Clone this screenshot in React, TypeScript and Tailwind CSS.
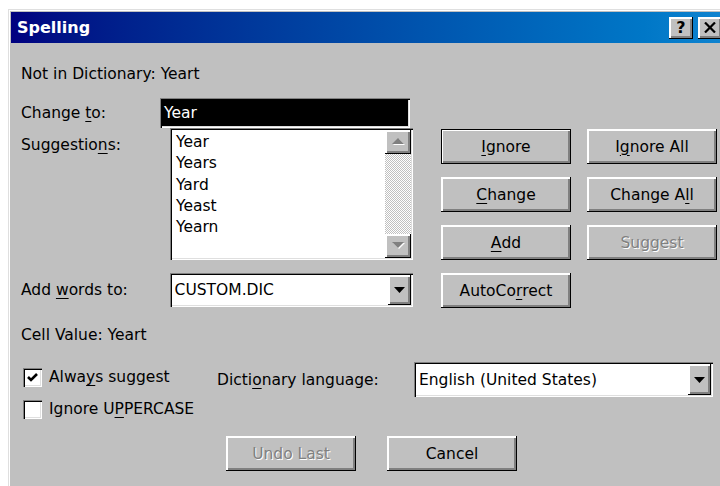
import type { ReactNode } from 'react';

// classic 3D bevels
const raised = 'shadow-[inset_-1px_-1px_0_#000,inset_2px_2px_0_#fff,inset_-3px_-3px_0_#808080]';
const sunken =
  'shadow-[inset_1px_1px_0_#808080,inset_2px_2px_0_#000,inset_-1px_-1px_0_#fff,inset_-2px_-2px_0_#dfdfdf]';

function Acc({ children }: { children: ReactNode }) {
  return <span className="underline underline-offset-[3px] decoration-1">{children}</span>;
}

function Button({
  children,
  isDefault,
  disabled,
}: {
  children: ReactNode;
  isDefault?: boolean;
  disabled?: boolean;
}) {
  return (
    <button
      className={`w-[130px] h-[35px] bg-[#c0c0c0] flex items-center justify-center ${raised} ${
        isDefault ? 'outline outline-1 outline-black -outline-offset-1' : ''
      } ${disabled ? 'text-[#808080] [text-shadow:1px_1px_0_#fff]' : 'text-black'}`}
    >
      {children}
    </button>
  );
}

function DownArrow({ color = '#000' }: { color?: string }) {
  return (
    <svg width="11" height="6" viewBox="0 0 11 6">
      <path d="M0 0 H11 L5.5 6 Z" fill={color} />
    </svg>
  );
}

function DropButton() {
  return (
    <div className={`w-[23px] h-full bg-[#c0c0c0] flex items-center justify-center ${raised}`}>
      <DownArrow />
    </div>
  );
}

function Combo({ value, className }: { value: string; className: string }) {
  return (
    <div className={`bg-white flex p-[2px] ${sunken} ${className}`}>
      <div className="flex-1 flex items-center pl-[3px]">{value}</div>
      <DropButton />
    </div>
  );
}

function Checkbox({ checked, children }: { checked?: boolean; children: ReactNode }) {
  return (
    <div className="flex items-center ml-[2px] gap-[7px]">
      <div className={`w-[19px] h-[19px] bg-white flex items-center justify-center ${sunken}`}>
        {checked && (
          <svg width="13" height="13" viewBox="0 0 13 13">
            <path d="M2 6 L5 9 L11 3" fill="none" stroke="#000" strokeWidth="2.6" />
          </svg>
        )}
      </div>
      <span>{children}</span>
    </div>
  );
}

function ScrollArrow({ up }: { up?: boolean }) {
  return (
    <div className={`h-[24px] bg-[#c0c0c0] flex items-center justify-center ${raised}`}>
      <svg width="13" height="8" viewBox="0 0 13 8">
        {up ? (
          <>
            <path d="M1 7 H13 L7 1 Z" fill="#fff" />
            <path d="M0 6 H12 L6 0 Z" fill="#808080" />
          </>
        ) : (
          <>
            <path d="M1 1 H13 L7 7 Z" fill="#fff" />
            <path d="M0 0 H12 L6 6 Z" fill="#808080" />
          </>
        )}
      </svg>
    </div>
  );
}

const suggestions = ['Year', 'Years', 'Yard', 'Yeast', 'Yearn'];

export default function App() {
  return (
    <div className="w-[720px] h-[486px] overflow-hidden bg-white pt-[9px] pl-[8px] font-['DejaVu_Sans',sans-serif]">
      <div className="w-[720px] h-[500px] bg-[#c0c0c0] border border-[#dfdfdf] p-[2px] shadow-[inset_1px_1px_0_#fff]">
        {/* title bar */}
        <div className="h-[31px] flex items-center justify-between pl-[6px] pr-[3px] bg-linear-to-r from-[#000080] to-[#1084d0]">
          <span className="text-white font-bold text-[16px]">Spelling</span>
          <div className="flex gap-[5px]">
            <div className={`w-[24px] h-[22px] bg-[#c0c0c0] flex items-center justify-center font-bold text-[16px] ${raised}`}>
              ?
            </div>
            <div className={`w-[24px] h-[22px] bg-[#c0c0c0] flex items-center justify-center ${raised}`}>
              <svg width="12" height="11" viewBox="0 0 12 11">
                <path d="M1 0.5 L11 10.5 M11 0.5 L1 10.5" stroke="#000" strokeWidth="2.2" />
              </svg>
            </div>
          </div>
        </div>

        <div className="pl-[10px] text-[15.5px] leading-[20px] text-black">
          <div className="mt-[21px]">Not in Dictionary: Yeart</div>

          <div className="mt-[14px] flex items-center">
            <div className="w-[139px]">
              Change <Acc>t</Acc>o:
            </div>
            <div className={`w-[250px] h-[30px] bg-white p-[2px] ${sunken}`}>
              <div className="h-full bg-black text-white flex items-center pl-[2px]">Year</div>
            </div>
          </div>

          <div className="flex">
            <div className="w-[392px]">
              <div className="flex">
                <div className="w-[149px] pt-[7px]">
                  Suggestio<Acc>n</Acc>s:
                </div>
                <div className={`w-[243px] h-[132px] bg-white p-[2px] flex ${sunken}`}>
                  <div className="flex-1 pt-[2px] pl-[4px] leading-[21.3px]">
                    {suggestions.map((s) => (
                      <div key={s}>{s}</div>
                    ))}
                  </div>
                  <div className="w-[26px] flex flex-col">
                    <ScrollArrow up />
                    <div className="flex-1 bg-[repeating-conic-gradient(#c0c0c0_0_25%,#fff_0_50%)] bg-[length:2px_2px]" />
                    <ScrollArrow />
                  </div>
                </div>
              </div>
              <div className="mt-[13px] flex items-center">
                <div className="w-[149px]">
                  Add <Acc>w</Acc>ords to:
                </div>
                <Combo value="CUSTOM.DIC" className="w-[244px] h-[34px]" />
              </div>
            </div>

            <div className="ml-[28px] pt-[1px] grid grid-cols-[130px_130px] gap-x-[16px] gap-y-[13px] content-start">
              <Button isDefault>
                <Acc>I</Acc>gnore
              </Button>
              <Button>
                I<Acc>g</Acc>nore All
              </Button>
              <Button>
                <Acc>C</Acc>hange
              </Button>
              <Button>
                Change A<Acc>l</Acc>l
              </Button>
              <Button>
                <Acc>A</Acc>dd
              </Button>
              <Button disabled>Suggest</Button>
              <Button>
                AutoCo<Acc>r</Acc>rect
              </Button>
            </div>
          </div>

          <div className="mt-[17px]">Cell Value: Yeart</div>

          <div className="mt-[17px] flex items-center h-[35px]">
            <div className="w-[196px] self-start pt-[5px]">
              <Checkbox checked>
                Alwa<Acc>y</Acc>s suggest
              </Checkbox>
            </div>
            <div className="w-[197px]">
              Dicti<Acc>o</Acc>nary language:
            </div>
            <Combo value="English (United States)" className="w-[299px] h-[35px]" />
          </div>

          <div className="mt-[2px]">
            <Checkbox>
              Ignore U<Acc>P</Acc>PERCASE
            </Checkbox>
          </div>

          <div className="mt-[17px] ml-[205px] flex gap-[31px]">
            <Button disabled>Undo Last</Button>
            <Button>Cancel</Button>
          </div>
        </div>
      </div>
    </div>
  );
}
